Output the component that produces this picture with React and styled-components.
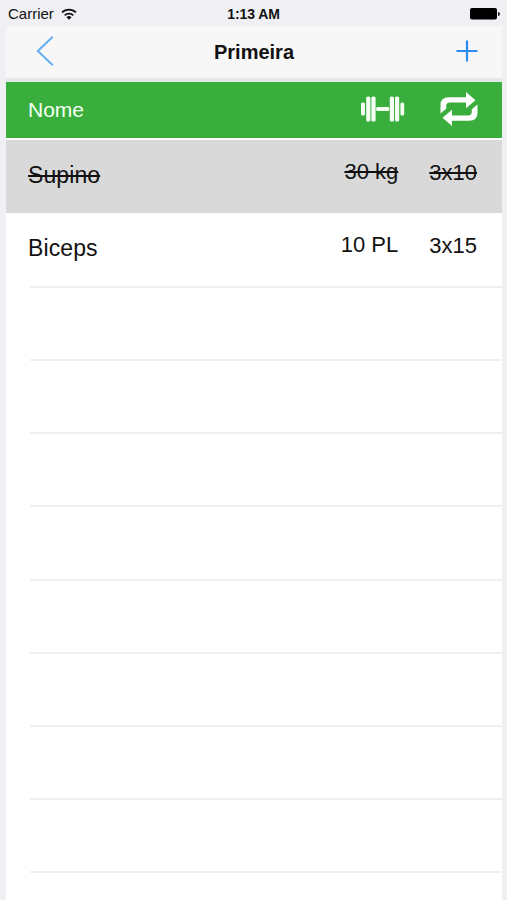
import styled, { createGlobalStyle } from 'styled-components';

const GlobalStyle = createGlobalStyle`
    * {
        box-sizing: border-box;
    }
    body {
        margin: 0;
        overflow: hidden;
        background-color: #efeff4;
        font-family: 'Liberation Sans', Arial, sans-serif;
    }
    svg {
        display: block;
    }
`;

const Screen = styled.div`
    height: 900px;
    padding: 0 5px 0 6px;
    overflow: hidden;
    background-color: #efeff4;
`;

const StatusBar = styled.header`
    display: grid;
    grid-template-columns: 1fr auto 1fr;
    align-items: center;
    height: 26px;
    padding: 2px 2px 0 2px;
    color: #111;
`;

const Carrier = styled.div`
    display: flex;
    align-items: center;
    gap: 7px;
    font-size: 15px;
    line-height: 24px;
`;

const Clock = styled.span`
    padding-right: 1px;
    font-size: 14px;
    font-weight: bold;
    letter-spacing: -0.1px;
    line-height: 24px;
`;

const Battery = styled.div`
    justify-self: end;
`;

const NavBar = styled.nav`
    display: grid;
    grid-template-columns: 1fr auto 1fr;
    align-items: center;
    height: 52px;
    padding: 0 24px 2px 30px;
    background-color: #f7f7f7;
`;

const NavButton = styled.button`
    justify-self: ${({ side }) => side};
    padding: 0;
    border: 0;
    background: none;
`;

const Title = styled.h1`
    margin: 0;
    padding: 2px 6px 0 0;
    font-size: 20px;
    color: #111;
`;

const Divider = styled.div`
    height: 3.5px;
    background-color: #e4e7e7;
`;

const TableHead = styled.div`
    display: flex;
    align-items: center;
    height: 56px;
    padding: 0 24px 0 22px;
    background-color: #3aae3c;
    color: #f4fff4;
    font-size: 21px;
`;

const HeadName = styled.span`
    flex: 1;
`;

const HeadIcon = styled.div`
    margin-left: ${({ gap }) => gap || 0}px;
    padding-bottom: 2px;
`;

const List = styled.div`
    height: 763px;
    padding-top: 2px;
    overflow: hidden;
    background-color: white;
`;

const Row = styled.div`
    display: flex;
    height: 73.2px;
    padding-left: 24px;
    color: #111;
    background-color: ${({ done }) => (done ? '#d9d9d9' : 'white')};
    text-decoration: ${({ done }) => (done ? 'line-through' : 'none')};
    text-decoration-thickness: 2px;
`;

const RowContent = styled.div`
    display: flex;
    flex: 1;
    padding-right: 25px;
    border-top: ${({ line }) => (line ? '2px solid #f0f0f2' : 'none')};
`;

const Name = styled.span`
    flex: 1;
    margin-left: -2px;
    padding-top: 21.5px;
    font-size: 23px;
    letter-spacing: 0.1px;
    line-height: 28px;
`;

const Value = styled.span`
    margin-left: 31px;
    padding-top: ${({ top }) => top}px;
    font-size: 22px;
    line-height: 28px;
`;

const exercises = [
    { name: 'Supino', load: '30 kg', reps: '3x10', done: true },
    { name: 'Biceps', load: '10 PL', reps: '3x15', done: false },
];

const emptyRows = [1, 2, 3, 4, 5, 6, 7, 8, 9];

function WifiIcon() {
    return (
        <svg width="16" height="13" viewBox="0 0 16 13" fill="none" stroke="#111" strokeWidth="1.8">
            <path d="M1 4.4a10 10 0 0 1 14 0M3.7 7.3a6.2 6.2 0 0 1 8.6 0" />
            <path d="M5.5 9.2a3.6 3.6 0 0 1 5 0L8 11.8z" fill="#111" stroke="none" />
        </svg>
    );
}

function BatteryIcon() {
    return (
        <svg width="30" height="12" viewBox="0 0 30 12">
            <rect width="27" height="11.5" rx="2" fill="#000" />
            <path d="M28 4a2 2 0 0 1 0 4z" fill="#222" />
        </svg>
    );
}

function BackIcon() {
    return (
        <svg width="18" height="30" viewBox="0 0 18 30" fill="none" stroke="#62adf5" strokeWidth="1.9">
            <path d="M16.8 .8L1.8 15l15 14.2" />
        </svg>
    );
}

function PlusIcon() {
    return (
        <svg width="22" height="22" viewBox="0 0 22 22" stroke="#2a8cf2" strokeWidth="2.2">
            <path d="M11 .5v21M.5 11h21" />
        </svg>
    );
}

function DumbbellIcon() {
    return (
        <svg width="44" height="26" viewBox="0 0 44 26" fill="#f4fff4">
            <rect x="0" y="6.5" width="4" height="13" rx="1.6" />
            <rect x="5.2" y=".5" width="4.2" height="25" rx="1.6" />
            <rect x="10.4" y=".5" width="4.2" height="25" rx="1.6" />
            <rect x="15.2" y="11" width="13" height="4" rx="1" />
            <rect x="28.8" y=".5" width="4.2" height="25" rx="1.6" />
            <rect x="34" y=".5" width="4.2" height="25" rx="1.6" />
            <rect x="39.4" y="6.5" width="3.8" height="13" rx="1.6" />
        </svg>
    );
}

function RepeatIcon() {
    return (
        <svg width="38" height="34" viewBox="0 0 38 34" fill="#fff">
            <path d="M.5 21.5V13Q.5 5.2 9 5.2h17V0l9.5 8.2L26 16.3v-5.8H10Q6.2 10.5 6.2 14.2v2.6z" />
            <path d="M37.5 12.5V21Q37.5 28.8 29 28.8H12V34l-9.5-8.2L12 17.7v5.8h16Q31.8 23.5 31.8 19.8v-2.6z" />
        </svg>
    );
}

function App() {
    return (
        <>
            <GlobalStyle />
            <Screen>
                <StatusBar>
                    <Carrier>
                        Carrier
                        <WifiIcon />
                    </Carrier>
                    <Clock>1:13 AM</Clock>
                    <Battery>
                        <BatteryIcon />
                    </Battery>
                </StatusBar>
                <NavBar>
                    <NavButton side="start" aria-label="Voltar">
                        <BackIcon />
                    </NavButton>
                    <Title>Primeira</Title>
                    <NavButton side="end" aria-label="Adicionar">
                        <PlusIcon />
                    </NavButton>
                </NavBar>
                <Divider />
                <TableHead>
                    <HeadName>Nome</HeadName>
                    <HeadIcon>
                        <DumbbellIcon />
                    </HeadIcon>
                    <HeadIcon gap={35}>
                        <RepeatIcon />
                    </HeadIcon>
                </TableHead>
                <List>
                    {exercises.map(({ name, load, reps, done }) => (
                        <Row key={name} done={done}>
                            <RowContent>
                                <Name>{name}</Name>
                                <Value top={18.6}>{load}</Value>
                                <Value top={19.6}>{reps}</Value>
                            </RowContent>
                        </Row>
                    ))}
                    {emptyRows.map((row) => (
                        <Row key={row}>
                            <RowContent line />
                        </Row>
                    ))}
                </List>
            </Screen>
        </>
    );
}

export default App;
